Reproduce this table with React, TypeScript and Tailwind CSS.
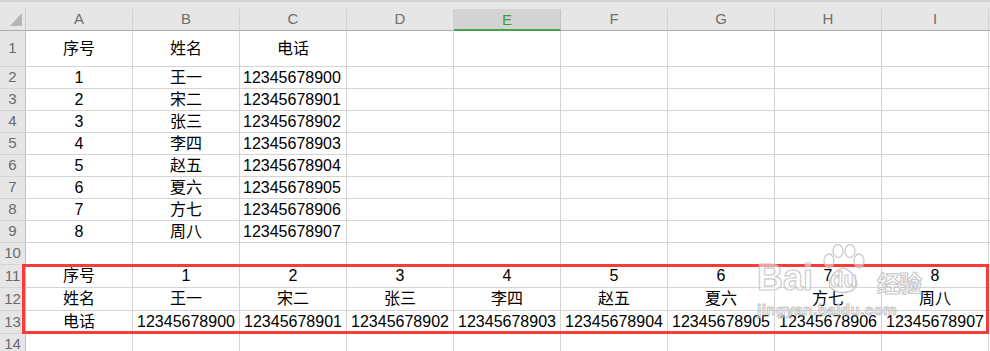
import React from 'react';

const COLS = ['A', 'B', 'C', 'D', 'E', 'F', 'G', 'H', 'I'];
const NAMES = ['王一', '宋二', '张三', '李四', '赵五', '夏六', '方七', '周八'];
const PHONES = NAMES.map((_, i) => `1234567890${i}`);

type Align = 'center' | 'left';
interface CellData {
  text: string;
  align?: Align;
}
interface RowData {
  num: number;
  height: string;
  cells: CellData[];
}

// vertical list in columns A-C
const listRows: RowData[] = [
  {
    num: 1,
    height: 'h-[36px]',
    cells: [{ text: '序号' }, { text: '姓名' }, { text: '电话' }],
  },
  ...NAMES.map((name, i) => ({
    num: i + 2,
    height: 'h-[22px]',
    cells: [{ text: String(i + 1) }, { text: name }, { text: PHONES[i], align: 'left' as Align }],
  })),
  { num: 10, height: 'h-[22px]', cells: [] },
];

// same data laid out across rows 11-13
const transposed: RowData[] = [
  { num: 11, height: 'h-[23px]', cells: [{ text: '序号' }, ...NAMES.map((_, i) => ({ text: String(i + 1) }))] },
  { num: 12, height: 'h-[23px]', cells: [{ text: '姓名' }, ...NAMES.map((n) => ({ text: n }))] },
  { num: 13, height: 'h-[23px]', cells: [{ text: '电话' }, ...PHONES.map((p) => ({ text: p }))] },
  { num: 14, height: 'h-[22px]', cells: [] },
];

function HeaderRow() {
  return (
    <div className="flex h-[22px] bg-[#e6e6e6]">
      <div className="relative w-[26px] shrink-0 border-r border-b border-r-[#cfcfcf] border-b-[#ababab]">
        <svg className="absolute left-[10px] top-[4px]" width="12" height="13" viewBox="0 0 12 13">
          <polygon points="12,0 12,13 0,13" fill="#b5b5b5" />
        </svg>
      </div>
      {COLS.map((c) => {
        const active = c === 'E';
        return (
          <div
            key={c}
            className={
              active
                ? 'flex w-[107px] shrink-0 items-center justify-center border-r border-b-2 border-r-[#c4c4c4] border-b-[#44a549] bg-[#d3d3d3] pt-[2px] text-[15px] text-[#3c9c3c]'
                : 'flex w-[107px] shrink-0 items-center justify-center border-r border-b border-r-[#d2d2d2] border-b-[#ababab] text-[15px] text-[#6f6f6f]'
            }
          >
            {c}
          </div>
        );
      })}
      <div className="flex-1 border-b border-b-[#ababab]" />
    </div>
  );
}

function SheetRow({ row }: { row: RowData }) {
  return (
    <div className={`flex ${row.height}`}>
      <div className="flex w-[26px] shrink-0 items-center justify-center border-r border-b border-r-[#c2c2c2] border-b-[#d4d4d4] bg-[#e6e6e6] text-[15px] text-[#6a6a6a]">
        {row.num}
      </div>
      {COLS.map((c, i) => {
        const cell = row.cells[i];
        return (
          <div
            key={c}
            className={`flex w-[107px] shrink-0 items-center whitespace-nowrap border-r border-b border-[#d4d4d4] text-[16px] text-black ${
              cell?.align === 'left' ? 'justify-start pl-[3px]' : 'justify-center'
            }`}
          >
            {cell?.text}
          </div>
        );
      })}
      <div className="flex-1 border-b border-[#d4d4d4]" />
    </div>
  );
}

function Watermark() {
  const outline = 'text-white/50 [-webkit-text-stroke:1.2px_rgba(185,185,185,0.75)]';
  return (
    <div className="pointer-events-none absolute left-[757px] top-[244px] select-none font-['Liberation_Sans','Noto_Sans_CJK_SC',sans-serif]">
      <div className="flex items-end">
        <span className={`text-[36px] font-bold leading-none ${outline}`}>Bai</span>
        <div className="relative ml-[8px] h-[52px] w-[44px]">
          <svg className="absolute inset-0" width="44" height="52" viewBox="0 0 44 52">
            <g fill="rgba(255,255,255,0.45)" stroke="rgba(185,185,185,0.75)" strokeWidth="1.3">
              <ellipse cx="8" cy="17" rx="5" ry="7" />
              <ellipse cx="17" cy="7" rx="5" ry="6.5" />
              <ellipse cx="29" cy="7" rx="5" ry="6.5" />
              <ellipse cx="38" cy="17" rx="5" ry="7" />
              <path d="M10 44 C4 38 14 26 22 24 C30 26 40 38 34 44 C29 50 15 50 10 44 Z" />
            </g>
          </svg>
          <span className={`absolute left-[9px] top-[25px] text-[22px] font-bold leading-none ${outline}`}>du</span>
        </div>
        <span className={`ml-[12px] text-[23px] font-bold leading-none tracking-[-1px] ${outline}`}>经验</span>
      </div>
      <div className={`mt-[6px] text-[15px] font-bold leading-none tracking-[0.5px] ${outline}`}>jingyan.baidu.com</div>
    </div>
  );
}

export default function App() {
  return (
    <div className="relative h-[351px] w-[990px] overflow-hidden bg-white font-['Liberation_Sans','Noto_Sans_CJK_SC',sans-serif]">
      <div className="h-[9px] border-t-2 border-[#d2d2d2] bg-[#e6e6e6]" />
      <HeaderRow />
      {listRows.map((r) => (
        <SheetRow key={r.num} row={r} />
      ))}
      {transposed.map((r) => (
        <SheetRow key={r.num} row={r} />
      ))}

      {/* highlight around the transposed block */}
      <div className="pointer-events-none absolute left-[22px] top-[264px] h-[70px] w-[967px] border-[3px] border-[#fb3a3a]" />

      <Watermark />
    </div>
  );
}
